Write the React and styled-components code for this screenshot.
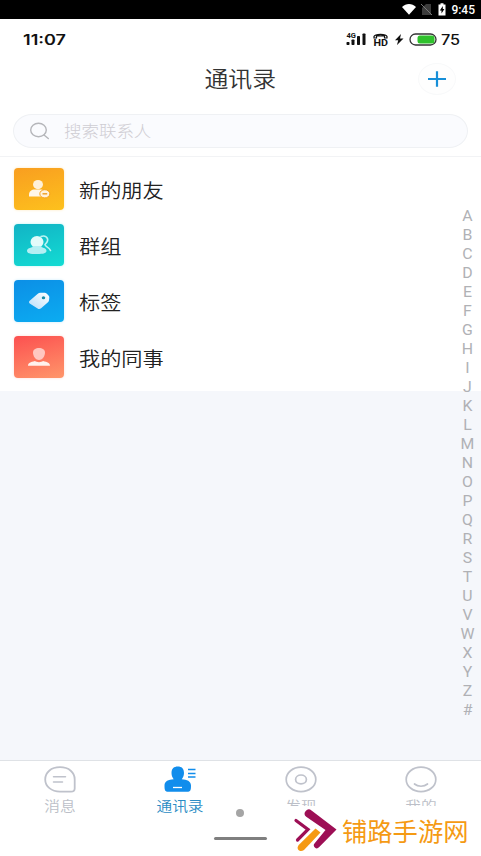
import React from "react";
import styled, { createGlobalStyle, css } from "styled-components";

const GlobalStyle = createGlobalStyle`
  * {
    box-sizing: border-box;
    margin: 0;
    padding: 0;
  }

  body {
    background-color: #fff;
    font-family: Roboto, "Noto Sans CJK SC", sans-serif;
  }

  svg {
    display: block;
    flex-shrink: 0;
  }
`;

const Screen = styled.div`
  position: relative;
  display: flex;
  flex-direction: column;
  width: 481px;
  height: 856px;
  overflow: hidden;
  background-color: #fff;
`;

const SystemBar = styled.div`
  display: flex;
  align-items: center;
  justify-content: flex-end;
  height: 19px;
  padding-right: 6px;
  background-color: #000;
  color: #fff;
  font-size: 12px;
  font-weight: 500;
`;

const PhoneBar = styled.div`
  display: flex;
  align-items: center;
  justify-content: space-between;
  height: 40px;
  padding: 0 23px 0 23px;
  color: #111;
`;

const Clock = styled.span`
  font-family: Inter, sans-serif;
  font-size: 14px;
  font-weight: 600;
  transform: scaleX(1.29);
  transform-origin: left;
`;

const Battery = styled.span`
  width: 17px;
  font-family: Inter, sans-serif;
  font-size: 14px;
  font-weight: 500;
  transform: scaleX(1.16);
  transform-origin: left;
`;

const PhoneStatus = styled.div`
  display: flex;
  align-items: center;
`;

const Header = styled.header`
  display: grid;
  grid-template-columns: 1fr auto 1fr;
  align-items: center;
  height: 39px;
  padding-right: 25px;
  padding-left: 25px;
`;

const Title = styled.h1`
  grid-column: 2;
  padding-top: 2px;
  color: #333;
  font-size: 21.5px;
  font-weight: 350;
  line-height: 30px;
  transform: scaleX(1.11);
`;

const AddButton = styled.button`
  display: flex;
  align-items: center;
  justify-content: center;
  justify-self: end;
  width: 38px;
  height: 32px;
  border: 1px solid #f8f9fa;
  border-radius: 50%;
  background-color: #fefefe;
`;

const SearchArea = styled.div`
  height: 59px;
  padding: 16px 13px 0;
  border-bottom: 1px solid #f2f3f5;
`;

const SearchBox = styled.div`
  display: flex;
  align-items: center;
  height: 34px;
  padding-left: 15px;
  border: 1px solid #eff1f4;
  border-radius: 19px / 17px;
  background-color: #fafbfe;
`;

const Placeholder = styled.span`
  margin-left: 14px;
  padding-top: 2px;
  color: #cfcdd3;
  font-size: 15.6px;
  font-weight: 300;
  line-height: 24px;
  transform: scaleX(1.12);
  transform-origin: left;
`;

const List = styled.ul`
  height: 234px;
  padding-top: 4px;
  list-style: none;
`;

const Row = styled.li`
  display: flex;
  align-items: center;
  height: 56px;
  padding-left: 14px;
`;

const Tile = styled.div`
  display: flex;
  align-items: center;
  justify-content: center;
  width: 50px;
  height: 42px;
  margin-right: 15px;
  border-radius: 4px;
  background: linear-gradient(165deg, ${(props) => props.$from}, ${(props) => props.$to});
  box-shadow: 0 0 3px ${(props) => props.$glow};
`;

const RowLabel = styled.span`
  padding-top: 5px;
  color: #222;
  font-size: 19px;
  font-weight: 350;
  line-height: 28px;
  transform: scaleX(1.115);
  transform-origin: left;
`;

const Body = styled.main`
  flex: 1;
  background-color: #f5f7fb;
`;

const LetterIndex = styled.div`
  position: absolute;
  top: 207px;
  right: 3px;
  display: flex;
  flex-direction: column;
  width: 21px;
  color: #b0b1b5;
  font-size: 14px;
  font-weight: 400;
  line-height: 19px;
  text-align: center;
`;

const Letter = styled.span`
  transform: scaleX(1.13);
`;

const TabBar = styled.nav`
  display: grid;
  grid-template-columns: repeat(4, 1fr);
  height: 96px;
  border-top: 1px solid #dfe2e6;
  background-color: #fff;
`;

const Tab = styled.div`
  display: flex;
  flex-direction: column;
  align-items: center;
  padding-top: 4px;
  color: #bcbfc8;

  ${(props) =>
    props.$active &&
    css`
      color: #2b8cc4;
    `}
`;

const TabLabel = styled.span`
  margin-top: 2px;
  font-size: 14px;
  font-weight: 350;
  line-height: 20px;
  transform: scaleX(1.12);
`;

const HomeDot = styled.div`
  position: absolute;
  top: 809px;
  left: 236px;
  width: 8px;
  height: 8px;
  border-radius: 50%;
  background-color: #a5a5a5;
`;

const HomeBar = styled.div`
  position: absolute;
  top: 837px;
  left: 214px;
  width: 53px;
  height: 3px;
  border-radius: 2px;
  background-color: #7f7f7f;
`;

const Watermark = styled.div`
  position: absolute;
  right: 0;
  bottom: 0;
  display: flex;
  align-items: center;
  width: 197px;
  height: 50px;
  padding-left: 8px;
  background-color: #fff;
`;

const WatermarkText = styled.span`
  margin-left: 4px;
  padding-top: 3px;
  color: #f59a13;
  font-size: 25.3px;
  line-height: 36px;
`;

function SystemIcons() {
  return (
    <svg width="50" height="19" viewBox="0 0 50 19">
      <path d="M1 7C5 3.100 11 3.100 15 7L8 14.800Z" fill="#fff" />
      <path d="M30 4v11H21V8l4-4Z" fill="#3c3c3c" />
      <path d="m20 4 11 11" stroke="#777" strokeWidth="1" />
      <path d="M37.500 4.500h2V3.200h3v1.300h2v11h-7Z" fill="#fff" />
      <path d="m41.800 6-3 4.600h1.700v3L43.400 9h-1.600Z" fill="#000" />
    </svg>
  );
}

function PhoneIcons() {
  return (
    <svg width="95" height="20" viewBox="346 29 95 20">
      <g fill="#111">
        <text x="346.500" y="37.500" fontFamily="Roboto" fontSize="7.500" fontWeight="700">4G</text>
        <rect x="346.500" y="42" width="3" height="3" rx=".7" />
        <rect x="351.500" y="39.500" width="3" height="5.500" rx=".7" />
        <rect x="357" y="36" width="3" height="9" rx=".7" />
        <rect x="362.500" y="33.500" width="3" height="11.500" rx=".7" />
        <text x="373.500" y="45.500" fontFamily="Roboto" fontSize="9.500" fontWeight="700" textLength="14.500" lengthAdjust="spacingAndGlyphs">HD</text>
        <path d="m401 34-6 6.200h3.200l-1.200 4.800 6.500-6.600h-3.500Z" />
      </g>
      <path d="M374 38v-1.500c1-2.800 12-2.800 13 0V38h-2.500v-2.200h-8V38Z" fill="none" stroke="#111" strokeWidth="1.200" />
      <rect x="410" y="34" width="26" height="11" rx="5.500" fill="#fff" stroke="#333" strokeWidth="1.300" />
      <rect x="417.500" y="35.500" width="17" height="8" rx="2.500" fill="#2fc12c" />
    </svg>
  );
}

function FriendIcon() {
  return (
    <svg width="24" height="20" viewBox="0 0 24 20">
      <ellipse cx="11" cy="5.600" rx="5" ry="4.600" fill="#fff0d8" />
      <path d="M2 17.500v-2c0-3 2.500-5 6-5h6c2 0 3.500 1 4 3v4Z" fill="#fff6e8" />
      <ellipse cx="17.800" cy="14.800" rx="5" ry="4.100" fill="#fff2dd" stroke="#f7a31d" />
      <path d="M15.500 14.800h4.700" stroke="#ef9d21" strokeWidth="1.400" />
    </svg>
  );
}

function GroupIcon() {
  return (
    <svg width="26" height="22" viewBox="0 0 26 22">
      <path d="M15 2.500c4-1.500 7.500 1 6.500 4.500-.4 1.500-1.500 2.500-2.500 3.500 0 2.500 4 2 5.500 6" fill="none" stroke="#baf4f3" strokeWidth="1.600" strokeLinecap="round" />
      <ellipse cx="11" cy="8" rx="6.500" ry="6" fill="#e2fbfa" />
      <path d="M7 12h8c0 2 5.500 1.500 5.500 4.700 0 2.400-2.500 3.300-9.700 3.300S1 19.200 1 16.700C1 13.500 7 14 7 12Z" fill="#b4eff3" />
    </svg>
  );
}

function TagIcon() {
  return (
    <svg width="24" height="20" viewBox="0 0 24 20">
      <defs>
        <linearGradient id="tagFill" x1="1" y1="0" x2="0" y2="1">
          <stop offset="0" stopColor="#fff" />
          <stop offset="1" stopColor="#b7ddfa" />
        </linearGradient>
      </defs>
      <path d="M2.700 9.800 10.500 3c.9-.8 2-1.200 3-1.200h3.500c1.200 0 2 .3 2.800 1l1.700 1.600c.7.700.9 1.400.8 2.400l-.3 2.400c-.1 1-.5 1.700-1.300 2.400l-6.600 5.700c-1.200 1-2.500 1-3.500.1l-7.900-5c-1-.8-1-1.700 0-2.600Z" fill="url(#tagFill)" />
      <ellipse cx="16.500" cy="6.700" rx="1.700" ry="1.500" fill="#178ba5" />
    </svg>
  );
}

function ColleagueIcon() {
  return (
    <svg width="24" height="20" viewBox="0 0 24 20">
      <path d="M6 5.500C6 2.500 8.700 1 12 1s6 1.500 6 4.500c0 4-2.800 7.500-6 7.500S6 9.500 6 5.500Z" fill="#ffc7c0" />
      <path d="M1 18.800c0-3 2.500-3.600 7-4.800 1.500 1.500 6.500 1.500 8 0 4.500 1.200 7 1.800 7 4.800Z" fill="#fff1ec" />
    </svg>
  );
}

function MessageTabIcon() {
  return (
    <svg width="34" height="29" viewBox="0 0 34 29" fill="none" stroke="#bfc2cb" strokeWidth="1.800" strokeLinecap="round">
      <path d="M17 2.200C8 2.200 2.200 7.500 2.200 14.500S8.500 26.600 17 26.600h11c2.200 0 3.700-1.200 3.700-3.200v-9C31.700 7.500 26 2.200 17 2.200Z" />
      <path d="M10.500 11.800h12M10.500 17h9" strokeWidth="1.500" />
    </svg>
  );
}

function ContactsTabIcon() {
  return (
    <svg width="34" height="29" viewBox="0 0 34 29" fill="#118dec">
      <path d="M8.500 8c0-4.500 2.500-6.500 6.300-6.500S21 3.500 21 8c0 3-1.200 4.700-2.200 6.200 5 .4 9.200 1.800 9.200 6.300 0 4.700-.5 6.300-4 6.300H5.500c-3.500 0-4-1.600-4-6.300 0-4.500 4-5.900 9.200-6.300C9.700 12.700 8.500 11 8.500 8Z" />
      <path d="M10 22.500h9" stroke="#fff" strokeWidth="1.300" />
      <path d="M25 4.500h7.500M25 8.500h7.500M25 12h7.500" stroke="#118dec" strokeWidth="1.400" />
    </svg>
  );
}

function DiscoverTabIcon() {
  return (
    <svg width="34" height="29" viewBox="0 0 34 29" fill="none" stroke="#bfc2cb" strokeWidth="1.700">
      <ellipse cx="17" cy="14.400" rx="14.800" ry="12.200" />
      <ellipse cx="17" cy="14.400" rx="5.400" ry="4.400" />
    </svg>
  );
}

function MeTabIcon() {
  return (
    <svg width="34" height="29" viewBox="0 0 34 29" fill="none" stroke="#bfc2cb" strokeWidth="1.700">
      <ellipse cx="17" cy="14.400" rx="14.800" ry="12.200" />
      <path d="M10.500 19c3.500 3 9.500 3 13 0" strokeLinecap="round" />
    </svg>
  );
}

function WatermarkLogo() {
  return (
    <svg width="46" height="50" viewBox="292 806 46 50" fill="none">
      <path d="m296 820.500 12 9-10.500 10.500" stroke="#9d0f55" strokeWidth="3.200" strokeLinecap="round" />
      <path d="m311.500 810.500 25 19-17.500 17.800a2.900 2.900 0 0 1-4.300-4l10.800-13.300-19.300-13.200a3.900 3.900 0 0 1 5.300-6.300Z" fill="#9d0f55" />
      <path d="m320.500 832.500-16.500 17.500c-4 3-8.500-1-5.300-5l16.800-16.500Z" fill="#f59a13" />
    </svg>
  );
}

const rows = [
  { label: "新的朋友", from: "#f99e20", to: "#fdc11d", glow: "#ffe9bd", icon: <FriendIcon /> },
  { label: "群组", from: "#12b3c5", to: "#12dcd3", glow: "#b9f4f2", icon: <GroupIcon /> },
  { label: "标签", from: "#0c8fe6", to: "#0cacf1", glow: "#c6eafc", icon: <TagIcon /> },
  { label: "我的同事", from: "#fc5050", to: "#ff966a", glow: "#ffdcd3", icon: <ColleagueIcon /> },
];

const tabs = [
  { label: "消息", icon: <MessageTabIcon /> },
  { label: "通讯录", icon: <ContactsTabIcon />, active: true },
  { label: "发现", icon: <DiscoverTabIcon /> },
  { label: "我的", icon: <MeTabIcon /> },
];

const letters = "ABCDEFGHIJKLMNOPQRSTUVWXYZ#".split("");

export default function App() {
  return (
    <>
      <GlobalStyle />
      <Screen>
        <SystemBar>
          <SystemIcons />
          <div>9:45</div>
        </SystemBar>
        <PhoneBar>
          <Clock>11:07</Clock>
          <PhoneStatus>
            <PhoneIcons />
            <Battery>75</Battery>
          </PhoneStatus>
        </PhoneBar>
        <Header>
          <Title>通讯录</Title>
          <AddButton aria-label="add">
            <svg width="20" height="18" viewBox="0 0 20 18">
              <path d="M1 9h18M10 1.300v15.400" stroke="#178fd8" strokeWidth="2.200" />
            </svg>
          </AddButton>
        </Header>
        <SearchArea>
          <SearchBox>
            <svg width="21" height="18" viewBox="0 0 21 18" fill="none" stroke="#b5b6ba" strokeWidth="1.400">
              <ellipse cx="9.500" cy="8" rx="7.800" ry="6.700" />
              <path d="m15 13 4.300 3.500" strokeLinecap="round" />
            </svg>
            <Placeholder>搜索联系人</Placeholder>
          </SearchBox>
        </SearchArea>
        <List>
          {rows.map((row) => (
            <Row key={row.label}>
              <Tile $from={row.from} $to={row.to} $glow={row.glow}>
                {row.icon}
              </Tile>
              <RowLabel>{row.label}</RowLabel>
            </Row>
          ))}
        </List>
        <Body />
        <TabBar>
          {tabs.map((tab) => (
            <Tab key={tab.label} $active={tab.active}>
              {tab.icon}
              <TabLabel>{tab.label}</TabLabel>
            </Tab>
          ))}
        </TabBar>
        <LetterIndex>
          {letters.map((letter) => (
            <Letter key={letter}>{letter}</Letter>
          ))}
        </LetterIndex>
        <HomeDot />
        <HomeBar />
        <Watermark>
          <WatermarkLogo />
          <WatermarkText>铺路手游网</WatermarkText>
        </Watermark>
      </Screen>
    </>
  );
}
